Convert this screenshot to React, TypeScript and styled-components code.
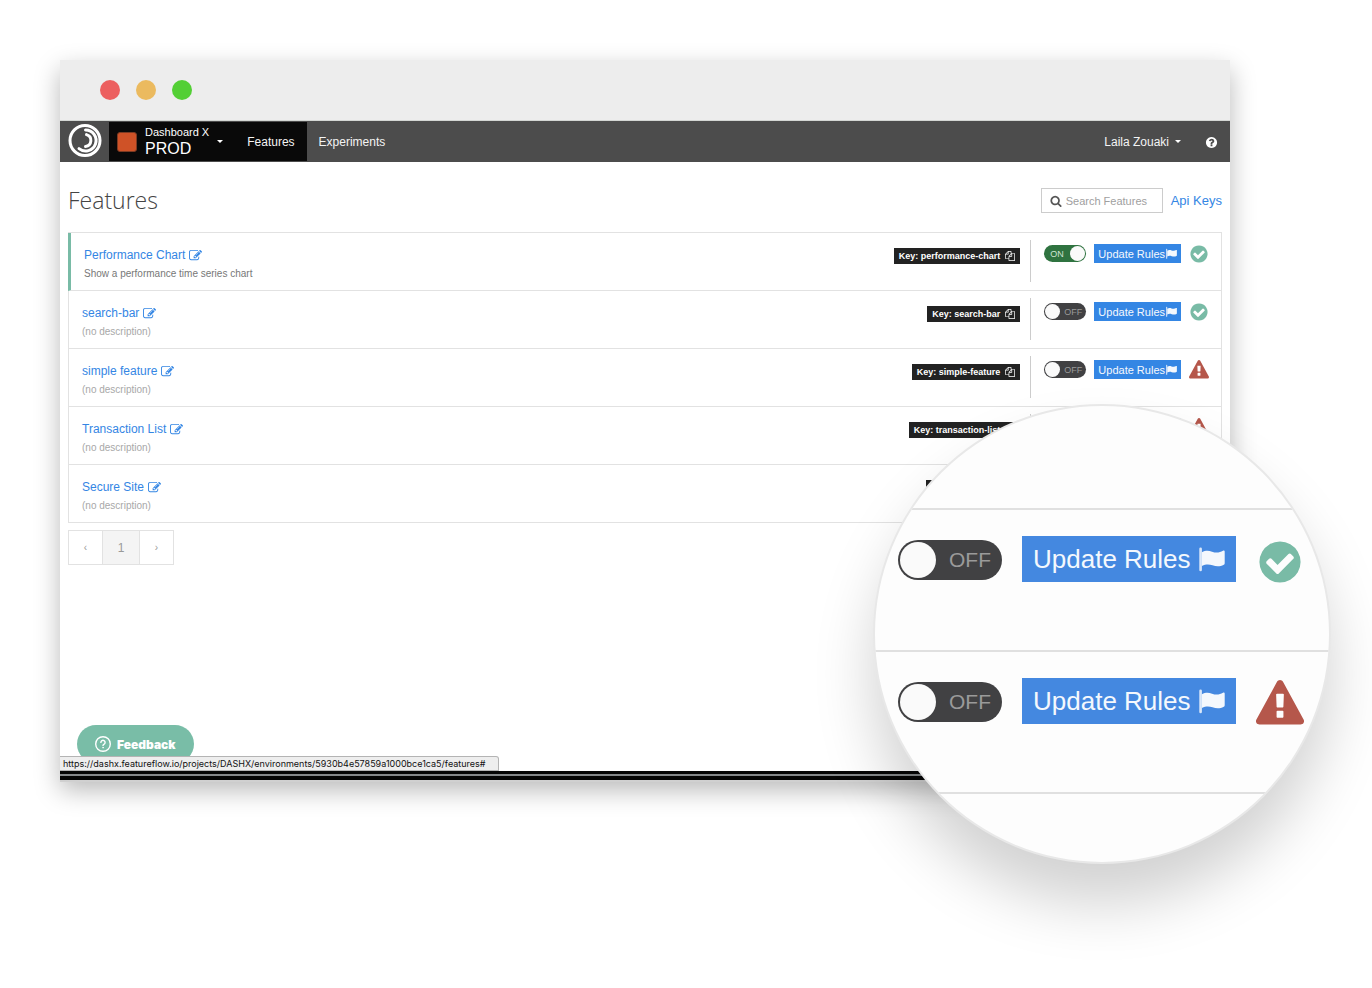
import React from 'react';
import styled, { createGlobalStyle, css } from 'styled-components';

const GlobalStyle = createGlobalStyle`
  *, *::before, *::after { box-sizing: border-box; }
  body {
    margin: 0;
    background: #fff;
    color: #555;
    font-family: "Liberation Sans", Helvetica, Arial, sans-serif;
    font-size: 12px;
    line-height: 16px;
  }
  button, input { font-family: inherit; }
  a { text-decoration: none; }
`;

/* ---------- icons ---------- */

const PATHS = {
  edit: 'M888 1184l116-116-152-152-116 116v56h96v96h56zm440-720q-16-16-33 1l-350 350q-17 17-1 33t33-1l350-350q17-17 1-33zm80 594v190q0 119-84.5 203.5t-203.5 84.5h-832q-119 0-203.5-84.5t-84.5-203.5v-832q0-119 84.5-203.5t203.5-84.5h832q63 0 117 25 15 7 18 23 3 17-9 29l-49 49q-14 14-32 8-23-6-45-6h-832q-66 0-113 47t-47 113v832q0 66 47 113t113 47h832q66 0 113-47t47-113v-126q0-13 9-22l64-64q15-15 35-7t20 29zm-96-738l288 288-672 672h-288v-288zm444 132l-92 92-288-288 92-92q28-28 68-28t68 28l152 152q28 28 28 68t-28 68z',
  copy: 'M1696 384q40 0 68 28t28 68v1216q0 40-28 68t-68 28h-960q-40 0-68-28t-28-68v-288h-544q-40 0-68-28t-28-68v-672q0-40 20-88t48-76l408-408q28-28 76-48t88-20h416q40 0 68 28t28 68v328q68-40 128-40h416zm-544 213l-299 299h299v-299zm-640-384l-299 299h299v-299zm196 647l316-316v-416h-384v416q0 40-28 68t-68 28h-416v640h512v-256q0-40 20-88t48-76zm956 804v-1152h-384v416q0 40-28 68t-68 28h-416v640h896z',
  check: 'M1412 734q0-28-18-46l-91-90q-19-19-45-19t-45 19l-408 407-226-226q-19-19-45-19t-45 19l-91 90q-18 18-18 46 0 27 18 45l362 362q19 19 45 19 27 0 46-19l543-543q18-18 18-45zm252 162q0 209-103 385.5t-279.5 279.5-385.5 103-385.5-103-279.5-279.5-103-385.5 103-385.5 279.5-279.5 385.5-103 385.5 103 279.5 279.5 103 385.5z',
  warning: 'M1024 1375v-190q0-14-9.5-23.5t-22.5-9.5h-192q-13 0-22.5 9.5t-9.5 23.5v190q0 14 9.5 23.5t22.5 9.5h192q13 0 22.5-9.5t9.5-23.5zm-2-374l18-459q0-12-10-19-13-11-24-11h-220q-11 0-24 11-10 7-10 21l17 457q0 10 10 16.5t24 6.5h185q14 0 23.5-6.5t10.5-16.5zm-14-934l768 1408q35 63-2 126-17 29-46.5 46t-63.5 17h-1536q-34 0-63.5-17t-46.5-46q-37-63-2-126l768-1408q17-31 47-49t65-18 65 18 47 49z',
  search: 'M1216 832q0-185-131.5-316.5t-316.5-131.5-316.5 131.5-131.5 316.5 131.5 316.5 316.5 131.5 316.5-131.5 131.5-316.5zm512 832q0 52-38 90t-90 38q-54 0-90-38l-343-342q-179 124-399 124-143 0-273.5-55.5t-225-150-150-225-55.5-273.5 55.5-273.5 150-225 225-150 273.5-55.5 273.5 55.5 225 150 150 225 55.5 273.5q0 220-124 399l343 343q37 37 37 90z',
  question: 'M1024 1376v-192q0-14-9-23t-23-9h-192q-14 0-23 9t-9 23v192q0 14 9 23t23 9h192q14 0 23-9t9-23zm256-672q0-88-55.5-163t-138.5-116-170-41q-243 0-371 213-15 24 8 42l132 100q7 6 19 6 16 0 25-12 53-68 86-92 34-24 86-24 48 0 85.5 26t37.5 59q0 38-20 61t-68 45q-63 28-115.5 86.5t-52.5 125.5v36q0 14 9 23t23 9h192q14 0 23-9t9-23q0-19 21.5-49.5t54.5-49.5q32-18 49-28.5t46-35 44.5-48 28-60.5 12.5-81zm384 192q0 209-103 385.5t-279.5 279.5-385.5 103-385.5-103-279.5-279.5-103-385.5 103-385.5 279.5-279.5 385.5-103 385.5 103 279.5 279.5 103 385.5z',
};

const Svg = styled.svg`
  display: block;
  flex: none;
  fill: currentColor;
`;

function Icon({ name, size }: { name: keyof typeof PATHS; size: number }) {
  return (
    <Svg width={size} height={size} viewBox="0 0 1792 1792" aria-hidden="true">
      <path d={PATHS[name]} />
    </Svg>
  );
}

function FlagIcon({ size }: { size: number }) {
  return (
    <Svg width={size} height={size} viewBox="0 0 26 26" aria-hidden="true">
      <path d="M.3 2.800a1.300 1.300 0 0 1 2.600 0V24a1.300 1.300 0 0 1-2.600 0z" opacity=".85" />
      <path d="M2.900 6.300C6.500 4.300 9.500 4.400 13 5.700c4 1.400 7.500 1.200 11-.9.900-.5 1.700-.2 1.700.8v11.600c0 .7-.3 1.200-.9 1.500-3.800 2.100-7.300 2-11.300.6-3.500-1.200-6.800-1.200-10.600.7z" />
    </Svg>
  );
}

function Logo() {
  return (
    <svg width="34" height="34" viewBox="0 0 34 34" fill="none" stroke="#fff" strokeLinecap="round" role="img" aria-label="Featureflow">
      <circle cx="17" cy="16.500" r="15" strokeWidth="3" />
      <path d="M17.500 6A10.500 10.500 0 1 1 11 24.700" strokeWidth="3" />
      <path d="M18.500 10.600A6.100 6.100 0 0 1 17.500 22.500" strokeWidth="3" />
    </svg>
  );
}

/* ---------- window ---------- */

const Page = styled.div`
  min-height: 100vh;
  padding: 60px 142px 120px 60px;
  overflow: hidden;
`;

const Window = styled.div`
  position: relative;
  background: #fff;
  box-shadow: 0 2px 0 #d0d0d0, 0 10px 24px rgba(0, 0, 0, 0.28);
`;

const TitleBar = styled.div`
  display: flex;
  align-items: center;
  gap: 16px;
  height: 61px;
  padding: 0 40px;
  background: #ededed;
  border-bottom: 1px solid #d3d6d3;
`;

const Dot = styled.span<{ $color: string }>`
  width: 20px;
  height: 20px;
  border-radius: 50%;
  background: ${(p) => p.$color};
`;

const NavBar = styled.nav`
  display: flex;
  align-items: stretch;
  height: 41px;
  padding: 1px 8px;
  background: #4c4c4c;
`;

const Brand = styled.a`
  display: flex;
  align-items: flex-start;
  padding-top: 2px;
  margin-right: 7px;
`;

const ProjectButton = styled.button`
  display: flex;
  align-items: center;
  gap: 8px;
  padding: 0 12px 0 8px;
  border: 0;
  background: #090909;
  color: #fff;
  text-align: left;
`;

const Swatch = styled.span`
  width: 20px;
  height: 20px;
  border: 1px solid #7d3a22;
  border-radius: 3px;
  background: #cf5227;
`;

const ProjectName = styled.span`
  display: block;
  font-size: 11px;
  line-height: 15px;
`;

const EnvName = styled.span`
  display: block;
  font-size: 16px;
  line-height: 18px;
`;

const Caret = styled.span`
  width: 0;
  height: 0;
  border: 3px solid transparent;
  border-top-color: #fff;
  border-bottom: 0;
`;

const NavLink = styled.a<{ $active?: boolean }>`
  display: flex;
  align-items: center;
  padding: 0 12px;
  color: #f4f4f4;
  background: ${(p) => (p.$active ? '#090909' : 'transparent')};
`;

const UserButton = styled.button`
  display: flex;
  align-items: center;
  gap: 6px;
  margin-left: auto;
  padding: 0;
  border: 0;
  background: none;
  color: #f4f4f4;
  font-size: 12px;
`;

const HelpLink = styled.a`
  display: flex;
  align-items: center;
  padding: 2px 4px 0 24px;
  color: #fff;
`;

const Content = styled.main`
  min-height: 609px;
  padding: 26px 8px 60px;
`;

const PageHead = styled.header`
  display: flex;
  align-items: center;
  gap: 8px;
  height: 25px;
  margin-bottom: 19px;
`;

const Title = styled.h1`
  flex: 1;
  margin: 0;
  color: #444;
  font-family: "Open Sans", "Noto Sans", sans-serif;
  font-size: 23px;
  font-weight: 300;
  line-height: 25px;
`;

const SearchBox = styled.label`
  display: flex;
  align-items: center;
  gap: 4px;
  width: 122px;
  height: 25px;
  padding-left: 8px;
  border: 1px solid #ccc;
  color: #555;
`;

const SearchInput = styled.input`
  flex: 1;
  min-width: 0;
  padding: 0;
  border: 0;
  outline: 0;
  background: none;
  font-size: 11px;
  &::placeholder { color: #a0a0a0; opacity: 1; }
`;

const ApiLink = styled.a`
  color: #3486e4;
  font-size: 13px;
`;

/* ---------- feature list ---------- */

const List = styled.ul`
  margin: 0;
  padding: 0;
  list-style: none;
  border-top: 1px solid #e2e2e2;
`;

const Row = styled.li<{ $active?: boolean }>`
  display: flex;
  align-items: flex-start;
  height: 58px;
  padding-left: 13px;
  border: 1px solid #e2e2e2;
  border-top: 0;
  ${(p) => p.$active && css`border-left: 3px solid #79bba6;`}
`;

const Info = styled.div`
  flex: 1;
  min-width: 0;
  padding-top: 14px;
`;

const FeatureLink = styled.a`
  display: inline-flex;
  align-items: center;
  gap: 4px;
  color: #3486e4;
`;

const Description = styled.p<{ $muted?: boolean }>`
  margin: 5px 0 0;
  color: ${(p) => (p.$muted ? '#a8a8a8' : '#777')};
  font-size: 10px;
  line-height: 12px;
`;

const KeyBadge = styled.button`
  display: flex;
  align-items: center;
  gap: 5px;
  height: 16px;
  margin: 15px 10px 0 0;
  padding: 0 5px;
  border: 0;
  background: #222;
  color: #fff;
  font-size: 9px;
  font-weight: 700;
  line-height: 16px;
`;

const ControlsBox = styled.div`
  height: 42px;
  margin-top: 7px;
  padding: 4px 12px 0 13px;
  border-left: 1px solid #ccc;
`;

const Controls = styled.div<{ $large?: boolean }>`
  display: flex;
  align-items: flex-start;
  gap: ${(p) => (p.$large ? 20 : 8)}px;
`;

const ToggleLabel = styled.label<{ $on?: boolean; $large?: boolean }>`
  position: relative;
  display: flex;
  align-items: center;
  justify-content: space-between;
  flex-direction: ${(p) => (p.$on ? 'row-reverse' : 'row')};
  width: ${(p) => (p.$large ? 104 : 42)}px;
  height: ${(p) => (p.$large ? 40 : 17)}px;
  margin-top: ${(p) => (p.$large ? 4 : 1)}px;
  padding: ${(p) => (p.$large ? '0 11px 0 2px' : p.$on ? '0 1px 0 6px' : '0 4px 0 1px')};
  border-radius: 20px;
  background: ${(p) => (p.$on ? '#2f7340' : '#414143')};
  color: ${(p) => (p.$on ? '#cfe3d4' : '#9a9a9a')};
  font-size: ${(p) => (p.$large ? 21 : 9)}px;
`;

const ToggleInput = styled.input`
  position: absolute;
  inset: 0;
  width: 100%;
  height: 100%;
  margin: 0;
  opacity: 0;
`;

const Knob = styled.span<{ $large?: boolean }>`
  width: ${(p) => (p.$large ? 36 : 15)}px;
  height: ${(p) => (p.$large ? 36 : 15)}px;
  border-radius: 50%;
  background: #fafafa;
`;

const UpdateButton = styled.button<{ $large?: boolean }>`
  display: flex;
  align-items: center;
  gap: ${(p) => (p.$large ? 8 : 1)}px;
  height: ${(p) => (p.$large ? 46 : 19)}px;
  padding: ${(p) => (p.$large ? '0 11px' : '0 4px')};
  border: 0;
  background: ${(p) => (p.$large ? '#4488e0' : '#3486e4')};
  color: #f4f8fd;
  font-size: ${(p) => (p.$large ? 26 : 11)}px;
  white-space: nowrap;
`;

const Status = styled.span<{ $ok: boolean; $large?: boolean }>`
  padding-top: ${(p) => (p.$large ? 2 : 0)}px;
  color: ${(p) => (p.$ok ? '#79bba6' : '#b5574b')};
`;

type ControlProps = { name: string; on?: boolean; ok: boolean; large?: boolean };

function FeatureControls({ name, on, ok, large }: ControlProps) {
  return (
    <Controls $large={large}>
      <ToggleLabel $on={on} $large={large}>
        <ToggleInput type="checkbox" defaultChecked={on} aria-label={`Toggle ${name}`} />
        <Knob $large={large} />
        {on ? 'ON' : 'OFF'}
      </ToggleLabel>
      <UpdateButton type="button" $large={large}>
        Update Rules
        <FlagIcon size={large ? 26 : 11} />
      </UpdateButton>
      <Status $ok={ok} $large={large}>
        <Icon name={ok ? 'check' : 'warning'} size={large ? 48 : 20} />
      </Status>
    </Controls>
  );
}

/* ---------- pagination ---------- */

const Pager = styled.nav`
  display: inline-flex;
  margin-top: 7px;
  border: 1px solid #e2e2e2;
`;

const PageButton = styled.button<{ $current?: boolean }>`
  width: ${(p) => (p.$current ? 38 : 33)}px;
  height: 33px;
  padding: 0;
  border: 0 solid #e2e2e2;
  border-width: ${(p) => (p.$current ? '0 1px' : 0)};
  background: ${(p) => (p.$current ? '#f4f4f4' : '#fff')};
  color: #999;
  font-size: ${(p) => (p.$current ? 12 : 10)}px;
`;

/* ---------- overlays ---------- */

const FeedbackButton = styled.button`
  position: absolute;
  left: 17px;
  bottom: 17px;
  display: flex;
  align-items: center;
  gap: 6px;
  height: 38px;
  padding: 0 18px;
  border: 0;
  border-radius: 19px;
  background: #79bda7;
  color: #fff;
  font-family: Inter, sans-serif;
  font-size: 12px;
  font-weight: 900;
`;

const StatusTip = styled.div`
  position: absolute;
  left: 0;
  bottom: 9px;
  height: 15px;
  padding: 0 12px 0 3px;
  border: 1px solid #b4b4b4;
  border-left: 0;
  border-radius: 0 3px 0 0;
  background: #eee;
  color: #111;
  font-family: Inter, sans-serif;
  font-size: 9px;
  line-height: 13px;
  white-space: nowrap;
`;

const DesktopEdge = styled.div`
  height: 9px;
  background: linear-gradient(#050505 3px, #85888a 3px, #85888a 5px, #050505 5px);
`;

const Lens = styled.section`
  position: absolute;
  top: 344px;
  right: -101px;
  width: 458px;
  height: 460px;
  padding-top: 102px;
  overflow: hidden;
  border: 2px solid #e8e8e8;
  border-radius: 50%;
  background: #fdfdfd;
  box-shadow: 0 40px 60px rgba(0, 0, 0, 0.18);
`;

const LensRow = styled.div`
  height: 142px;
  padding: 26px 0 0 23px;
  border-top: 2px solid #e0e0e0;
  &:last-child { height: 2px; padding: 0; }
`;

const features = [
  { name: 'Performance Chart', key: 'performance-chart', description: 'Show a performance time series chart', on: true, ok: true },
  { name: 'search-bar', key: 'search-bar', ok: true },
  { name: 'simple feature', key: 'simple-feature', ok: false },
  { name: 'Transaction List', key: 'transaction-list', ok: false },
  { name: 'Secure Site', key: 'secure-site', ok: false },
];

export default function App() {
  return (
    <Page>
      <GlobalStyle />
      <Window>
        <TitleBar>
          <Dot $color="#ec5f5f" />
          <Dot $color="#ebba5f" />
          <Dot $color="#53cf35" />
        </TitleBar>
        <NavBar>
          <Brand href="#"><Logo /></Brand>
          <ProjectButton type="button">
            <Swatch />
            <span>
              <ProjectName>Dashboard X</ProjectName>
              <EnvName>PROD</EnvName>
            </span>
            <Caret />
          </ProjectButton>
          <NavLink href="#" $active>Features</NavLink>
          <NavLink href="#">Experiments</NavLink>
          <UserButton type="button">Laila Zouaki <Caret /></UserButton>
          <HelpLink href="#" aria-label="Help"><Icon name="question" size={13} /></HelpLink>
        </NavBar>
        <Content>
          <PageHead>
            <Title>Features</Title>
            <SearchBox>
              <Icon name="search" size={12} />
              <SearchInput type="text" placeholder="Search Features" aria-label="Search Features" />
            </SearchBox>
            <ApiLink href="#">Api Keys</ApiLink>
          </PageHead>
          <List>
            {features.map((f) => (
              <Row key={f.key} $active={f.on}>
                <Info>
                  <FeatureLink href="#">{f.name}<Icon name="edit" size={13} /></FeatureLink>
                  <Description $muted={!f.description}>{f.description ?? '(no description)'}</Description>
                </Info>
                <KeyBadge type="button">Key: {f.key}<Icon name="copy" size={10} /></KeyBadge>
                <ControlsBox>
                  <FeatureControls name={f.name} on={f.on} ok={f.ok} />
                </ControlsBox>
              </Row>
            ))}
          </List>
          <Pager aria-label="Pages">
            <PageButton type="button">‹</PageButton>
            <PageButton type="button" $current>1</PageButton>
            <PageButton type="button">›</PageButton>
          </Pager>
        </Content>
        <DesktopEdge />
        <FeedbackButton type="button">
          <svg width="16" height="16" viewBox="0 0 16 16" fill="none" stroke="#fff" strokeLinecap="round" aria-hidden="true">
            <circle cx="8" cy="8" r="7.300" strokeWidth="1.400" />
            <path d="M5.900 6.400a2.100 2.100 0 1 1 3.200 1.800c-.7.400-1.100.7-1.100 1.400" strokeWidth="1.400" />
            <circle cx="8" cy="11.700" r=".4" strokeWidth=".8" />
          </svg>
          Feedback
        </FeedbackButton>
        <StatusTip>https://dashx.featureflow.io/projects/DASHX/environments/5930b4e57859a1000bce1ca5/features#</StatusTip>
        <Lens aria-label="Magnified feature controls">
          <LensRow><FeatureControls name="search-bar, magnified" ok large /></LensRow>
          <LensRow><FeatureControls name="simple feature, magnified" ok={false} large /></LensRow>
          <LensRow />
        </Lens>
      </Window>
    </Page>
  );
}
